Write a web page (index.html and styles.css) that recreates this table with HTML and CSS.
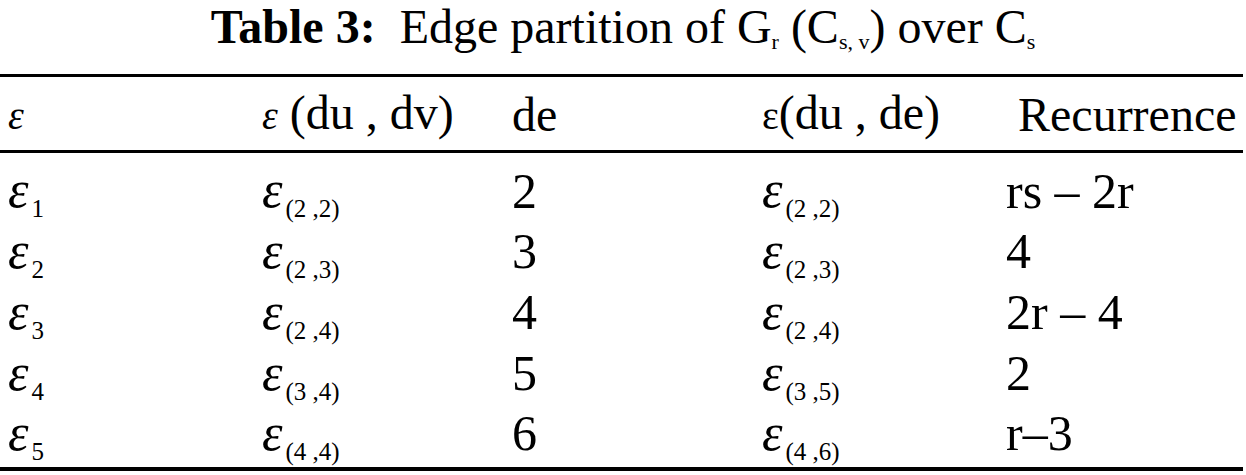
FILE: index.html
```html
<!DOCTYPE html>
<html lang="en">
<head>
  <meta charset="UTF-8">
  <title>Table 3</title>
  <link rel="stylesheet" href="styles.css">
</head>
<body>
  <!-- Caption -->
  <div class="caption">
    <b>Table 3:</b>&nbsp; Edge partition of G<sub>r</sub> (C<sub>s, v</sub>) over C<sub>s</sub>
  </div>

  <!-- Edge partition table -->
  <table class="partition">
    <thead>
      <tr>
        <th><i class="eps-sm">ε</i></th>
        <th><i class="eps-sm">ε</i> (du , dv)</th>
        <th>de</th>
        <th><span class="eps-up">ε</span>(du , de)</th>
        <th class="rec">Recurrence</th>
      </tr>
    </thead>
    <tbody>
      <tr>
        <td><i class="eps">ε</i><sub>1</sub></td>
        <td><i class="eps">ε</i><sub>(2 ,2)</sub></td>
        <td class="num">2</td>
        <td><i class="eps">ε</i><sub>(2 ,2)</sub></td>
        <td class="num">rs – 2r</td>
      </tr>
      <tr>
        <td><i class="eps">ε</i><sub>2</sub></td>
        <td><i class="eps">ε</i><sub>(2 ,3)</sub></td>
        <td class="num">3</td>
        <td><i class="eps">ε</i><sub>(2 ,3)</sub></td>
        <td class="num">4</td>
      </tr>
      <tr>
        <td><i class="eps">ε</i><sub>3</sub></td>
        <td><i class="eps">ε</i><sub>(2 ,4)</sub></td>
        <td class="num">4</td>
        <td><i class="eps">ε</i><sub>(2 ,4)</sub></td>
        <td class="num">2r – 4</td>
      </tr>
      <tr>
        <td><i class="eps">ε</i><sub>4</sub></td>
        <td><i class="eps">ε</i><sub>(3 ,4)</sub></td>
        <td class="num">5</td>
        <td><i class="eps">ε</i><sub>(3 ,5)</sub></td>
        <td class="num">2</td>
      </tr>
      <tr class="last">
        <td><i class="eps">ε</i><sub>5</sub></td>
        <td><i class="eps">ε</i><sub>(4 ,4)</sub></td>
        <td class="num">6</td>
        <td><i class="eps">ε</i><sub>(4 ,6)</sub></td>
        <td class="num">r–3</td>
      </tr>
    </tbody>
  </table>
</body>
</html>
```

FILE: styles.css
```css
/* Page */
body {
  font-family: "Liberation Serif", "Times New Roman", serif;
  background: #ffffff;
  color: #000000;
  margin: 0;
  width: 1246px;
}

/* Caption */
.caption {
  text-align: center;
  font-size: 48px;
  line-height: 52px;
  padding-top: 1px;
  height: 74px;
  box-sizing: border-box;
}
.caption sub {
  font-size: 22px;
  vertical-align: -6px;
}

/* Table */
.partition {
  width: 1243px;
  border-collapse: collapse;
  border-top: 3px solid #000;
  border-bottom: 4px solid #000;
}
.partition th {
  font-weight: normal;
  text-align: left;
  font-size: 48px;
  line-height: 52px;
  height: 76px;
  padding: 2px 0 0 8px;
  border-bottom: 3px solid #000;
  box-sizing: border-box;
}
.partition th:nth-child(1) { width: 254px; }
.partition th:nth-child(2) { width: 250px; }
.partition th:nth-child(3) { width: 250px; }
.partition th:nth-child(4) { width: 244px; }
.partition th.rec { padding-left: 20px; }

.partition td {
  height: 61px;
  line-height: 40px;
  padding: 16px 0 0 8px;
  font-size: 48px;
  vertical-align: middle;
  white-space: nowrap;
  box-sizing: border-box;
}
.partition tr.last td {
  height: 73px;
  padding-bottom: 12px;
}
.partition td.num {
  font-size: 50px;
}

/* Epsilon glyphs */
.eps-sm {
  font-size: 40px;
}
.eps-up {
  font-style: normal;
  font-size: 40px;
}
.eps {
  font-size: 52px;
  line-height: 40px;
}
.partition td sub {
  font-size: 25px;
  line-height: 0;
  vertical-align: -10px;
  margin-left: 3px;
}
```
